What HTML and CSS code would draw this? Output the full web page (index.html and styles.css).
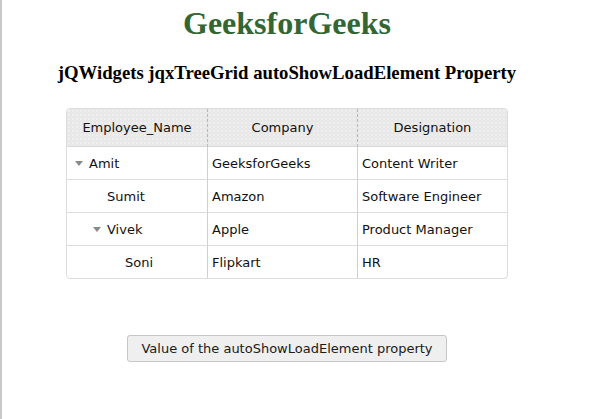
FILE: index.html
```html
<!DOCTYPE html>
<html>
<head>
<meta charset="utf-8">
<link rel="stylesheet" href="styles.css">
</head>
<body>
<div class="page">
  <h1 class="title">GeeksforGeeks</h1>
  <h3 class="subtitle">jQWidgets jqxTreeGrid autoShowLoadElement Property</h3>
  <div class="grid">
    <div class="hcell">Employee_Name</div>
    <div class="hcell">Company</div>
    <div class="hcell last">Designation</div>

    <div class="cell lvl0"><span class="arrow"><svg width="8" height="5" viewBox="0 0 8 5"><path d="M0 0H8L4 5Z" fill="#8a8a8a"/></svg></span>Amit</div>
    <div class="cell">GeeksforGeeks</div>
    <div class="cell last">Content Writer</div>

    <div class="cell lvl1"><span class="arrow"></span>Sumit</div>
    <div class="cell">Amazon</div>
    <div class="cell last">Software Engineer</div>

    <div class="cell lvl1"><span class="arrow"><svg width="8" height="5" viewBox="0 0 8 5"><path d="M0 0H8L4 5Z" fill="#8a8a8a"/></svg></span>Vivek</div>
    <div class="cell">Apple</div>
    <div class="cell last">Product Manager</div>

    <div class="cell lvl2 bottom"><span class="arrow"></span>Soni</div>
    <div class="cell bottom">Flipkart</div>
    <div class="cell last bottom">HR</div>
  </div>
  <div class="actions">
    <button class="btn">Value of the autoShowLoadElement property</button>
  </div>
</div>
</body>
</html>
```
FILE: styles.css
```css
html, body {
  margin: 0;
  padding: 0;
  background: #fff;
}
body {
  border-left: 2px solid #c8c8c8;
  min-height: 419px;
  box-sizing: border-box;
}
.page {
  width: 570px;
  padding-top: 5px;
  text-align: center;
  font-family: "Liberation Serif", "Times New Roman", serif;
}
.title {
  margin: 0;
  font-size: 32px;
  line-height: 37px;
  font-weight: bold;
  color: #336633;
}
.subtitle {
  margin: 20px 0 0;
  font-size: 18.72px;
  line-height: 22px;
  font-weight: bold;
  color: #000;
}
.grid {
  margin: 24px auto 0;
  width: 440px;
  display: grid;
  grid-template-columns: 141px 150px 149px;
  border: 1px solid #dcdcdc;
  border-radius: 4px;
  overflow: hidden;
  font-family: "DejaVu Sans", Verdana, sans-serif;
  font-size: 13px;
  color: #111;
  text-align: left;
}
.hcell {
  height: 37px;
  display: flex;
  align-items: center;
  justify-content: center;
  background-color: #e8e8e8;
  background-image: radial-gradient(#f4f4f4 0.6px, transparent 0.8px);
  background-size: 4px 4px;
  border-right: 1px dashed #b8b8b8;
  border-bottom: 1px solid #d8d8d8;
  color: #111;
}
.cell {
  height: 32px;
  display: flex;
  align-items: center;
  padding-left: 4px;
  border-right: 1px solid #cfcfcf;
  border-bottom: 1px solid #dddddd;
  white-space: nowrap;
}
.last {
  border-right: none;
}
.bottom {
  border-bottom: none;
}
.arrow {
  width: 14px;
  display: inline-flex;
  align-items: center;
  flex: none;
}
.lvl0 { padding-left: 8px; }
.lvl1 { padding-left: 26px; }
.lvl2 { padding-left: 44px; }
.actions {
  margin-top: 56px;
  display: flex;
  justify-content: center;
}
.btn {
  height: 27px;
  padding: 0 13px;
  border: 1px solid #c6c6c6;
  border-radius: 3px;
  background: #efefef;
  font-family: "DejaVu Sans", Verdana, sans-serif;
  font-size: 13px;
  color: #1a1a1a;
}
```
